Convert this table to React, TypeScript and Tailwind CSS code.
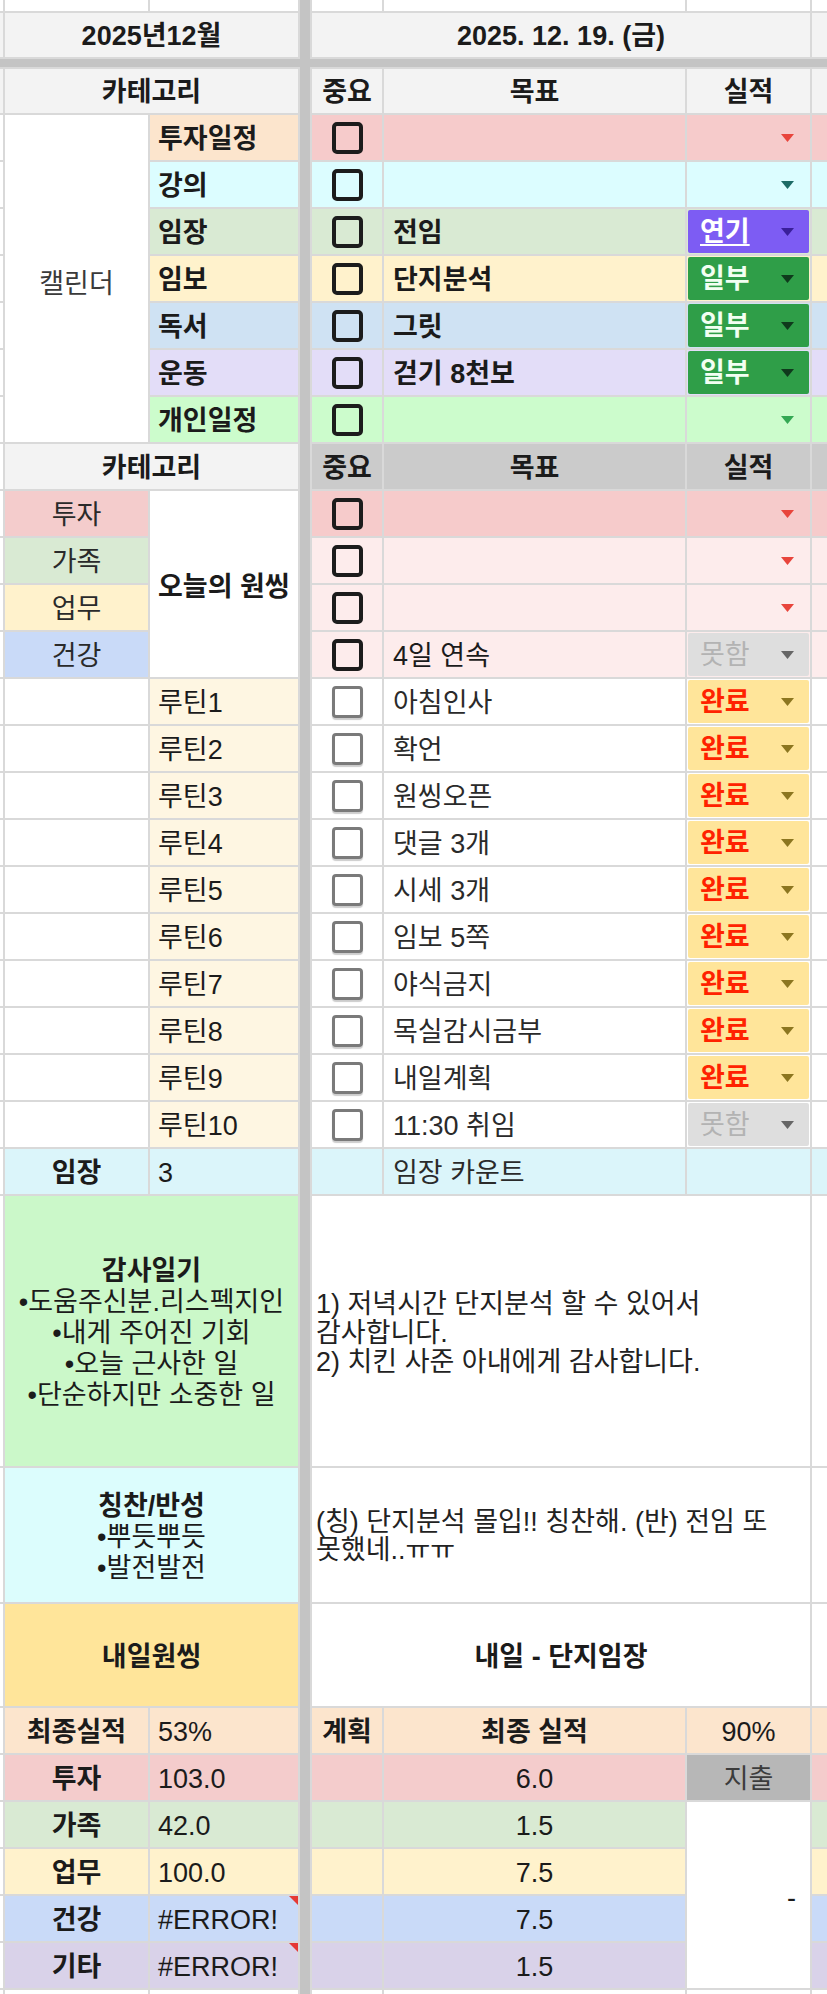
import React from "react";

type Res =
  | { kind: "none"; arrow: string }
  | { kind: "chip"; label: string; box: string; txt: string; arrow: string };

const noneRed: Res = { kind: "none", arrow: "#e8453c" };
const yeongi: Res = { kind: "chip", label: "연기", box: "bg-[#7d5cf3]", txt: "text-white font-bold underline underline-offset-[3px]", arrow: "#3a1f9a" };
const ilbu: Res = { kind: "chip", label: "일부", box: "bg-[#2f9e48]", txt: "text-[#f2fff2] font-bold", arrow: "#0f3a1c" };
const wanryo: Res = { kind: "chip", label: "완료", box: "bg-[#ffe59a]", txt: "text-[#ff2200] font-bold", arrow: "#8c7620" };
const mothan: Res = { kind: "chip", label: "못함", box: "bg-[#dedede]", txt: "text-[#b3b3b3]", arrow: "#666666" };

const calendar = [
  { cat: "투자일정", catBg: "bg-[#fce5cd]", bg: "bg-[#f6cbcb]", goal: "", res: noneRed },
  { cat: "강의", catBg: "bg-[#dcfdff]", bg: "bg-[#dcfdff]", goal: "", res: { kind: "none", arrow: "#1d6b66" } as Res },
  { cat: "임장", catBg: "bg-[#d9ead3]", bg: "bg-[#d9ead3]", goal: "전임", res: yeongi },
  { cat: "임보", catBg: "bg-[#fff2cc]", bg: "bg-[#fff2cc]", goal: "단지분석", res: ilbu },
  { cat: "독서", catBg: "bg-[#cfe2f3]", bg: "bg-[#cfe2f3]", goal: "그릿", res: ilbu },
  { cat: "운동", catBg: "bg-[#e3ddf8]", bg: "bg-[#e3ddf8]", goal: "걷기 8천보", res: ilbu },
  { cat: "개인일정", catBg: "bg-[#ccfccc]", bg: "bg-[#ccfccc]", goal: "", res: { kind: "none", arrow: "#34a853" } as Res },
];

const oneThing = [
  { cat: "투자", catBg: "bg-[#f4cccc]", bg: "bg-[#f6cbcb]", goal: "", res: noneRed },
  { cat: "가족", catBg: "bg-[#d9ead3]", bg: "bg-[#fdecec]", goal: "", res: noneRed },
  { cat: "업무", catBg: "bg-[#fff2cc]", bg: "bg-[#fdecec]", goal: "", res: noneRed },
  { cat: "건강", catBg: "bg-[#c9daf8]", bg: "bg-[#fdecec]", goal: "4일 연속", res: mothan },
];

const routines = [
  "아침인사",
  "확언",
  "원씽오픈",
  "댓글 3개",
  "시세 3개",
  "임보 5쪽",
  "야식금지",
  "목실감시금부",
  "내일계획",
  "11:30 취임",
];

const finals = [
  { cat: "투자", bg: "bg-[#f4cccc]", val: "103.0", plan: "6.0", err: false },
  { cat: "가족", bg: "bg-[#d9ead3]", val: "42.0", plan: "1.5", err: false },
  { cat: "업무", bg: "bg-[#fff2cc]", val: "100.0", plan: "7.5", err: false },
  { cat: "건강", bg: "bg-[#c9daf8]", val: "#ERROR!", plan: "7.5", err: true },
  { cat: "기타", bg: "bg-[#d9d2e9]", val: "#ERROR!", plan: "1.5", err: true },
];

function Tri({ color }: { color: string }) {
  return (
    <svg width="13" height="8" viewBox="0 0 13 8" className="shrink-0">
      <polygon points="0,0 13,0 6.5,8" fill={color} />
    </svg>
  );
}

function Box({ bold }: { bold?: boolean }) {
  if (bold) {
    return <div className="w-[31px] h-[32px] rounded-[5px] border-[4px] border-[#1c1c1c]" />;
  }
  return (
    <div className="w-[31px] h-[32px] rounded-[4px] border-[3px] border-[#7a7a7a] bg-white shadow-[0_2px_1px_rgba(0,0,0,0.2)]" />
  );
}

function Result({ r, bg }: { r: Res; bg: string }) {
  if (r.kind === "none") {
    return (
      <div className={`${bg} flex items-center justify-end pr-[16px]`}>
        <Tri color={r.arrow} />
      </div>
    );
  }
  return (
    <div className={`${bg} p-[1px]`}>
      <div className={`${r.box} h-full rounded-[2px] flex items-center justify-between pl-[12px] pr-[15px]`}>
        <span className={`${r.txt} pt-[2px]`}>{r.label}</span>
        <Tri color={r.arrow} />
      </div>
    </div>
  );
}

function W({ bg = "bg-white" }: { bg?: string }) {
  return <div className={bg} />;
}

export default function App() {
  return (
    <div className="w-[827px] h-[1994px] overflow-hidden bg-white">
      <div className="grid grid-cols-[3px_143px_148px_10px_70px_301px_123px_15px] grid-rows-[11px_44px_8px_44px_repeat(23,45px)_270px_134px_102px_repeat(6,45px)_4px] gap-[2px] bg-[#d9d9d9] font-['Liberation_Sans','Noto_Sans_CJK_KR',sans-serif] text-[27px] leading-none text-[#1b1b1b] whitespace-nowrap">
        {/* frozen pane dividers */}
        <div className="col-start-4 row-span-full bg-[#c4c4c4]" />
        <div className="row-start-3 col-span-full bg-[#c4c4c4]" />

        {/* row 1 - cut off */}
        <W /><W /><W /><W /><W /><W /><W />

        {/* row 2 - dates */}
        <W bg="bg-[#f3f3f3]" />
        <div className="col-span-2 bg-[#f3f3f3] flex items-center justify-center font-bold pt-[3px]">2025년12월</div>
        <div className="col-span-3 bg-[#f3f3f3] flex items-center justify-center font-bold pt-[3px]">2025. 12. 19. (금)</div>
        <W bg="bg-[#f3f3f3]" />

        {/* row 4 - header */}
        <W bg="bg-[#f3f3f3]" />
        <div className="col-span-2 bg-[#f3f3f3] flex items-center justify-center font-bold pt-[3px]">카테고리</div>
        <div className="bg-[#f3f3f3] flex items-center justify-center font-bold pt-[3px]">중요</div>
        <div className="bg-[#f3f3f3] flex items-center justify-center font-bold pt-[3px]">목표</div>
        <div className="bg-[#f3f3f3] flex items-center justify-center font-bold pt-[3px]">실적</div>
        <W bg="bg-[#f3f3f3]" />

        {/* calendar */}
        {calendar.map((row, i) => (
          <React.Fragment key={row.cat}>
            <W />
            {i === 0 && (
              <div className="row-span-7 bg-white flex items-center justify-center pt-[12px] text-[#3a3a3a]">캘린더</div>
            )}
            <div className={`${row.catBg} flex items-center pl-[8px] pt-[3px] font-bold`}>{row.cat}</div>
            <div className={`${row.bg} flex items-center justify-center`}>
              <Box bold />
            </div>
            <div className={`${row.bg} flex items-center pl-[9px] pt-[3px] font-bold`}>{row.goal}</div>
            <Result r={row.res} bg={row.bg} />
            <W bg={row.bg} />
          </React.Fragment>
        ))}

        {/* header 2 */}
        <W />
        <div className="col-span-2 bg-[#f3f3f3] flex items-center justify-center font-bold pt-[3px]">카테고리</div>
        <div className="bg-[#cbcbcb] flex items-center justify-center font-bold pt-[3px]">중요</div>
        <div className="bg-[#cbcbcb] flex items-center justify-center font-bold pt-[3px]">목표</div>
        <div className="bg-[#cbcbcb] flex items-center justify-center font-bold pt-[3px]">실적</div>
        <W bg="bg-[#cbcbcb]" />

        {/* one thing */}
        {oneThing.map((row, i) => (
          <React.Fragment key={row.cat}>
            <W />
            <div className={`${row.catBg} flex items-center justify-center pt-[3px] text-[#2a2a2a]`}>{row.cat}</div>
            {i === 0 && (
              <div className="row-span-4 bg-white flex items-center pl-[8px] pt-[6px] font-bold">오늘의 원씽</div>
            )}
            <div className={`${row.bg} flex items-center justify-center`}>
              <Box bold />
            </div>
            <div className={`${row.bg} flex items-center pl-[9px] pt-[3px]`}>{row.goal}</div>
            <Result r={row.res} bg={row.bg} />
            <W bg={row.bg} />
          </React.Fragment>
        ))}

        {/* routines */}
        {routines.map((goal, i) => (
          <React.Fragment key={goal}>
            <W />
            <W />
            <div className="bg-[#fef6e2] flex items-center pl-[8px] pt-[3px]">루틴{i + 1}</div>
            <div className="bg-white flex items-center justify-center">
              <Box />
            </div>
            <div className="bg-white flex items-center pl-[9px] pt-[3px] text-[#2a2a2a]">{goal}</div>
            <Result r={i === 9 ? mothan : wanryo} bg="bg-white" />
            <W />
          </React.Fragment>
        ))}

        {/* site visit count */}
        <W />
        <div className="bg-[#dbf5fa] flex items-center justify-center font-bold pt-[3px]">임장</div>
        <div className="bg-[#dbf5fa] flex items-center pl-[8px] pt-[3px]">3</div>
        <W bg="bg-[#dbf5fa]" />
        <div className="bg-[#dbf5fa] flex items-center pl-[9px] pt-[3px] text-[#2a2a2a]">임장 카운트</div>
        <W bg="bg-[#dbf5fa]" />
        <W bg="bg-[#dbf5fa]" />

        {/* gratitude */}
        <W />
        <div className="col-span-2 bg-[#cbf8c9] flex flex-col items-center justify-center leading-[31px] pt-[4px]">
          <span className="font-bold">감사일기</span>
          <span>•도움주신분.리스펙지인</span>
          <span>•내게 주어진 기회</span>
          <span>•오늘 근사한 일</span>
          <span>•단순하지만 소중한 일</span>
        </div>
        <div className="col-span-3 bg-white flex flex-col justify-center pl-[4px] leading-[29px] pt-[4px] text-[#222]">
          <span>1) 저녁시간 단지분석 할 수 있어서</span>
          <span>감사합니다.</span>
          <span>2) 치킨 사준 아내에게 감사합니다.</span>
        </div>
        <W />

        {/* praise / reflection */}
        <W />
        <div className="col-span-2 bg-[#dcfdfd] flex flex-col items-center justify-center leading-[31px] pt-[4px]">
          <span className="font-bold">칭찬/반성</span>
          <span>•뿌듯뿌듯</span>
          <span>•발전발전</span>
        </div>
        <div className="col-span-3 bg-white flex flex-col justify-center pl-[4px] leading-[28px] pt-[2px] text-[#222]">
          <span>(칭) 단지분석 몰입!! 칭찬해. (반) 전임 또</span>
          <span>못했네..ㅠㅠ</span>
        </div>
        <W />

        {/* tomorrow */}
        <W />
        <div className="col-span-2 bg-[#ffe59a] flex items-center justify-center font-bold pt-[4px]">내일원씽</div>
        <div className="col-span-3 bg-white flex items-center justify-center font-bold pt-[4px]">내일 - 단지임장</div>
        <W />

        {/* final results */}
        <W />
        <div className="bg-[#fce5cd] flex items-center justify-center font-bold pt-[3px]">최종실적</div>
        <div className="bg-[#fce5cd] flex items-center pl-[8px] pt-[3px]">53%</div>
        <div className="bg-[#fce5cd] flex items-center justify-center font-bold pt-[3px]">계획</div>
        <div className="bg-[#fce5cd] flex items-center justify-center font-bold pt-[3px]">최종 실적</div>
        <div className="bg-[#fce5cd] flex items-center justify-center pt-[3px]">90%</div>
        <W bg="bg-[#fce5cd]" />

        {finals.map((row, i) => (
          <React.Fragment key={row.cat}>
            <W />
            <div className={`${row.bg} flex items-center justify-center font-bold pt-[3px]`}>{row.cat}</div>
            <div className={`${row.bg} relative flex items-center pl-[8px] pt-[3px]`}>
              {row.val}
              {row.err && (
                <svg width="9" height="9" viewBox="0 0 9 9" className="absolute top-0 right-0">
                  <polygon points="0,0 9,0 9,9" fill="#e53935" />
                </svg>
              )}
            </div>
            <W bg={row.bg} />
            <div className={`${row.bg} flex items-center justify-center pt-[3px]`}>{row.plan}</div>
            {i === 0 && (
              <div className="bg-[#b7b7b7] flex items-center justify-center pt-[3px] text-[#3c3c3c]">지출</div>
            )}
            {i === 1 && (
              <div className="row-span-4 bg-white flex items-center justify-end pr-[14px] pt-[6px]">-</div>
            )}
            <W bg={row.bg} />
          </React.Fragment>
        ))}

        {/* cut off bottom row */}
        <W /><W /><W /><W /><W /><W /><W />
      </div>
    </div>
  );
}
